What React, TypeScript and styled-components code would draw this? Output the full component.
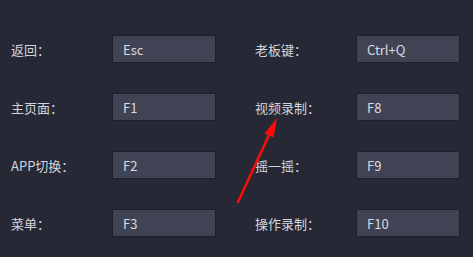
import styled, { createGlobalStyle } from "styled-components";

const GlobalStyle = createGlobalStyle`
    html, body {
        margin: 0;
        padding: 0;
        background: #262935;
    }
    body {
        font-family: "Microsoft YaHei", "Noto Sans CJK SC", "Noto Sans", sans-serif;
    }
`;

const Page = styled.div`
    position: relative;
    width: 473px;
    height: 257px;
    box-sizing: border-box;
    padding: 35px 0 0 11px;
    background: #262935;
    overflow: hidden;
`;

const Grid = styled.div`
    display: grid;
    grid-template-columns: 244px 244px;
    row-gap: 30px;
`;

const Row = styled.div`
    display: flex;
    align-items: center;
    height: 28px;
`;

const Label = styled.span`
    width: 101px;
    flex: none;
    font-size: 13px;
    color: #d3d5dd;
    white-space: nowrap;
`;

const KeyBox = styled.div`
    width: 104px;
    height: 28px;
    box-sizing: border-box;
    display: flex;
    align-items: center;
    padding-left: 10px;
    background: #404354;
    border: 1px solid #1c1e28;
    font-size: 13px;
    color: #d8dae2;
`;

const Arrow = styled.svg`
    position: absolute;
    left: 0;
    top: 0;
    pointer-events: none;
`;

const shortcuts: [string, string][] = [
    ["返回：", "Esc"],
    ["老板键：", "Ctrl+Q"],
    ["主页面：", "F1"],
    ["视频录制：", "F8"],
    ["APP切换：", "F2"],
    ["摇一摇：", "F9"],
    ["菜单：", "F3"],
    ["操作录制：", "F10"],
];

export default function App() {
    return (
        <>
            <GlobalStyle />
            <Page>
                <Grid>
                    {shortcuts.map(([label, key]) => (
                        <Row key={label}>
                            <Label>{label}</Label>
                            <KeyBox>{key}</KeyBox>
                        </Row>
                    ))}
                </Grid>
                <Arrow width="473" height="257" viewBox="0 0 473 257">
                    <line
                        x1="238"
                        y1="202"
                        x2="270"
                        y2="133"
                        stroke="#ff0a0a"
                        strokeWidth="2.6"
                        strokeLinecap="round"
                    />
                    <polygon points="277,118 264.5,133.5 273.5,137.5" fill="#ff0a0a" />
                </Arrow>
            </Page>
        </>
    );
}
